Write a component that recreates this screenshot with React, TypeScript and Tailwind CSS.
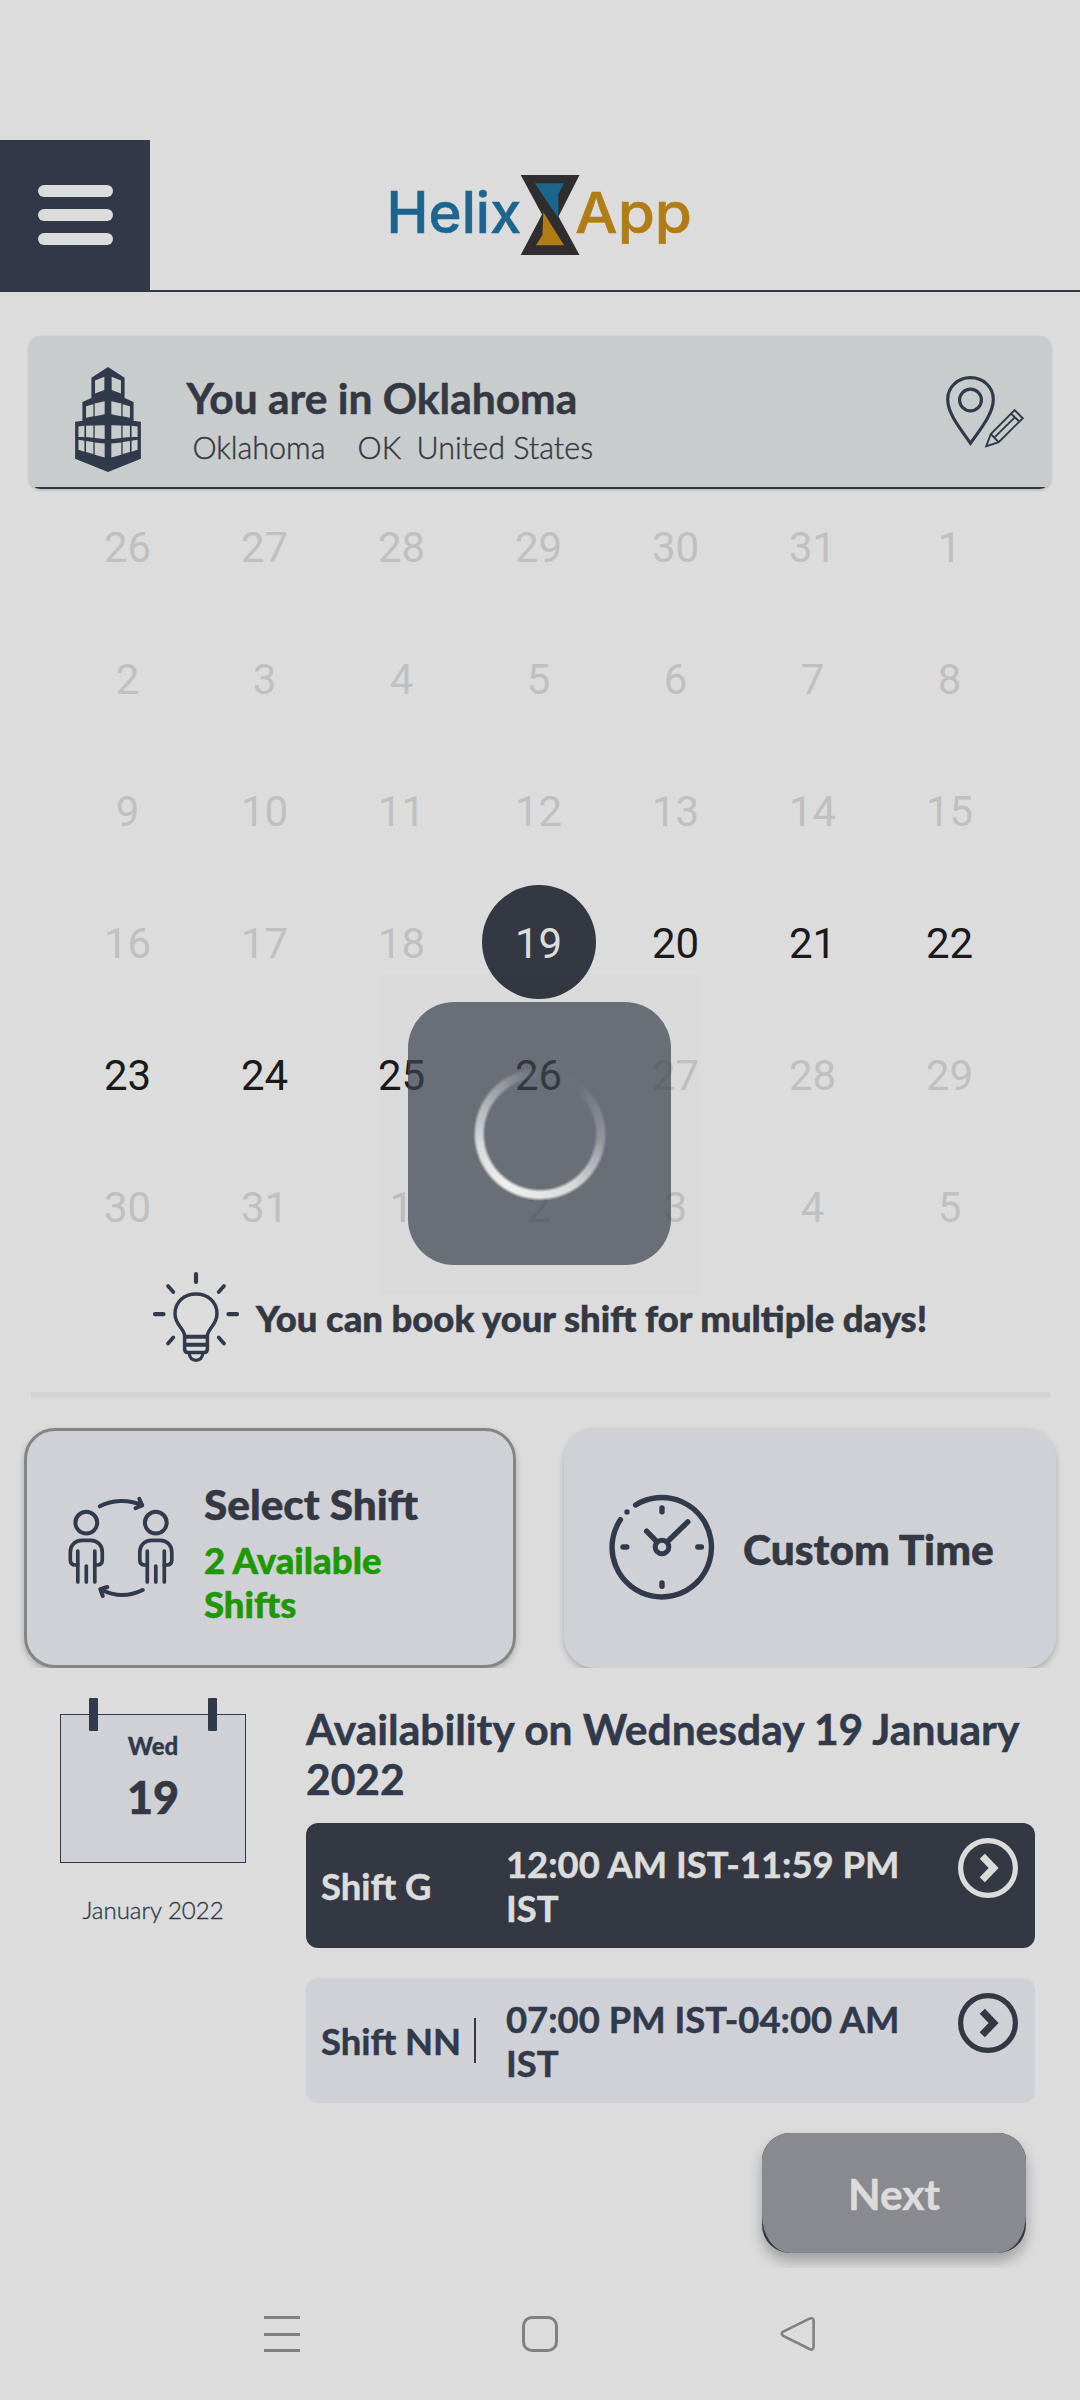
import React from "react";

const INK = "#313a4b";

function Logo() {
  return (
    <svg className="block overflow-visible" width="320" height="84" viewBox="380 173 320 84">
      <text x="386.5" y="232.5" fontFamily="Inter" fontWeight="500" fontSize="57" fill="#1c658f" stroke="#1c658f" strokeWidth="0.5" textLength="135" lengthAdjust="spacingAndGlyphs">Helix</text>
      <text x="575" y="232.5" fontFamily="Inter" fontWeight="500" fontSize="56" fill="#b07c16" stroke="#b07c16" strokeWidth="0.5" textLength="117" lengthAdjust="spacingAndGlyphs">App</text>
      <path d="M520.7 175H579.5L558.5 216.5L579.5 255H520.7L542 214.5Z" fill="#302d2e" />
      <path d="M535 183.3H564L558.3 194V217.5L551 207.5Z" fill="#1c658f" />
      <path d="M543.3 212L564 245.3H536L542.4 235Z" fill="#b07c16" />
    </svg>
  );
}

function Building() {
  return (
    <svg className="block" width="66" height="105" viewBox="75 50 198 316">
      <path fill={INK} d="M174 50L224 82V143L251 155V212L273 215V326L174 366L75 326V215L97 212V155L124 143V82Z" />
      <g fill="#c8cccc">
        {["", "translate(348 0) scale(-1 1)"].map((t) => (
          <g key={t} transform={t}>
            <path d="M135 91L163 79V119L135 130Z" />
            <path d="M108 168L130 162V198L108 203Z" />
            <path d="M134 160L164 153V192L134 198Z" />
            <path d="M85 229L103 227V261L85 261Z" />
            <path d="M108 227L130 226V263L108 261Z" />
            <path d="M134 226L164 225V267L134 264Z" />
            <path d="M85 269L103 272V305L85 299Z" />
            <path d="M108 273L130 276V312L108 306Z" />
            <path d="M134 277L164 280V322L134 314Z" />
          </g>
        ))}
      </g>
    </svg>
  );
}

function PinPencil() {
  return (
    <svg className="block" width="82" height="76" viewBox="944 374 82 76" fill="none" stroke={INK}>
      <g strokeWidth="3.2">
        <path d="M970.5 443.2C959 427 947.7 413 947.7 399.5C947.7 387 957.8 377.7 970.5 377.7C983.2 377.7 993.3 387 993.3 399.5C993.3 413 982 427 970.5 443.2Z" />
        <circle cx="970.5" cy="400" r="10.9" />
      </g>
      <g strokeWidth="1.9">
        <path d="M986.3 446.2L990.8 434L1014.6 410.2L1022.8 418.2L998.7 442.2Z" />
        <path d="M990.8 434L998.7 442.2M1011 413.5L1019.5 421.8M994.2 437.6L1014.5 417.6" />
      </g>
    </svg>
  );
}

function Bulb() {
  return (
    <svg className="block" width="88" height="92" viewBox="152 1271 88 92" fill="none" stroke={INK} strokeLinecap="round">
      <path strokeWidth="4.2" d="M196 1274V1282M155 1314.2H163.5M228.5 1314.2H237" />
      <path strokeWidth="3.7" d="M168 1286L173.3 1292M224 1286L218.7 1292M173.3 1337.5L168 1343.5M218.7 1337.5L224 1343.5" />
      <path strokeWidth="3.5" d="M184.6 1335C183 1327 175 1325 175 1313.5C175 1302 184 1294 196 1294C208 1294 217 1302 217 1313.5C217 1325 209 1327 207.4 1335V1349Q207.4 1352.5 204 1352.5H188Q184.6 1352.5 184.6 1349Z" />
      <path strokeWidth="3.9" strokeLinecap="butt" d="M184.6 1336.7H207.4M184.6 1344.8H207.4" />
      <path strokeWidth="3.3" d="M189 1353C190 1358.5 192 1360.3 196 1360.3C200 1360.3 202 1358.5 203 1353" />
    </svg>
  );
}

function SwapPeople() {
  return (
    <svg className="block" width="106" height="106" viewBox="68.5 1494 106 106" fill="none" stroke={INK} strokeWidth="4" strokeLinecap="round" strokeLinejoin="round">
      {[0, 69.5].map((dx) => (
        <g key={dx} transform={`translate(${dx} 0)`}>
          <circle cx="86.8" cy="1522.7" r="10.9" />
          <path strokeWidth="3.7" d="M78.3 1551V1582M95.3 1551V1582M86.8 1566V1582" />
          <path strokeWidth="3.7" d="M78.3 1565H76C72.5 1565 70.8 1563 70.8 1560V1552C70.8 1545.5 75.5 1540.3 82.5 1540.3H91.1C98.1 1540.3 102.8 1545.5 102.8 1552V1560C102.8 1563 101.1 1565 97.6 1565H95.3" />
        </g>
      ))}
      <path d="M100.3 1506.3C113 1499.5 129 1499.5 142 1505M139.8 1498.8L142.8 1505.5L136 1508.2" />
      <path d="M143.2 1590C130 1596.5 115 1596.5 101.5 1589.5M107.8 1587L100.8 1589.2L103.2 1596" />
    </svg>
  );
}

function Clock() {
  return (
    <svg className="block" width="106" height="106" viewBox="608.2 1494.3 106 106" fill="none" stroke={INK} strokeWidth="5.4" strokeLinecap="round">
      <path d="M634.8 1505.3A49.7 49.7 0 1 1 619.6 1520" />
      <path d="M626.2 1512.3V1512.4M661.2 1508.3V1512M661.2 1583.3V1586.5M622.2 1547.3H626M697 1547.3H700.6" />
      <circle cx="661.2" cy="1547.3" r="6.8" strokeWidth="5" />
      <path d="M645.8 1531.5L656 1542M687 1522.2L667 1541.5" />
    </svg>
  );
}

function GoIcon({ color }: { color: string }) {
  return (
    <svg className="block shrink-0" width="60" height="60" viewBox="0 0 60 60" fill="none" stroke={color}>
      <circle cx="30" cy="30" r="27.4" strokeWidth="5.2" />
      <path strokeWidth="7.2" d="M24.3 18.3L35.6 30L24.3 41.7" />
    </svg>
  );
}

const days: number[][] = [
  [26, 27, 28, 29, 30, 31, 1],
  [2, 3, 4, 5, 6, 7, 8],
  [9, 10, 11, 12, 13, 14, 15],
  [16, 17, 18, 19, 20, 21, 22],
  [23, 24, 25, 26, 27, 28, 29],
  [30, 31, 1, 2, 3, 4, 5],
];

function Calendar() {
  return (
    <div className="ml-[59px] grid w-[959px] grid-cols-7 gap-y-[18px] font-['Roboto'] text-[42px]">
      {days.flat().map((d, i) => {
        const selected = i === 24;
        const open = i > 24 && i < 32;
        const tone = selected ? "rounded-full bg-[#343842] text-[#dcdcdc]" : open ? "text-[#1a1a1a]" : "text-[#c0c0c0]";
        return (
          <div key={i} className="flex h-[114px] justify-center">
            <div className={`flex size-[114px] items-center justify-center pt-[3px] ${tone}`}>{d}</div>
          </div>
        );
      })}
    </div>
  );
}

function Loader() {
  return (
    <div className="absolute top-[974px] left-[380px] flex size-[320px] items-center justify-center bg-black/[0.006]">
      <div className="-mt-px -ml-px flex size-[262.5px] items-center justify-center rounded-[46px] bg-[rgba(62,68,80,0.717)]">
        <div className="size-[134px] rounded-full bg-[conic-gradient(from_0deg,rgba(240,240,240,0.02)_0deg,rgba(240,240,240,0.02)_40deg,rgba(240,240,240,0.3)_95deg,rgba(240,240,240,0.8)_145deg,rgba(240,240,240,0.92)_180deg,rgba(240,240,240,1)_215deg,rgba(240,240,240,0.82)_262deg,rgba(240,240,240,0.42)_312deg,rgba(240,240,240,0.15)_340deg,rgba(240,240,240,0.02)_360deg)] [mask-image:radial-gradient(circle,transparent_54.5px,black_58px,black_63.5px,transparent_67px)]" />
      </div>
    </div>
  );
}

function ShiftRow({ name, time, active }: { name: string; time: string; active?: boolean }) {
  return (
    <div className={`flex h-[125px] w-[729px] rounded-[12px] text-[36.4px] leading-[44px] font-bold [-webkit-text-stroke-width:0.5px] ${active ? "bg-[#343842] text-[#dcdcdc]" : "bg-[#d0d1d7] text-[#313a4b]"}`}>
      <div className="mt-[40px] flex h-[45px] w-[170px] items-center justify-between pl-[15px] whitespace-nowrap">
        <span>{name}</span>
        {!active && <span className="h-[45px] w-[2px] bg-[#343842]" />}
      </div>
      <div className="mt-[19px] ml-[30px] w-[420px]">{time}</div>
      <div className="mt-[15px] ml-[32px]">
        <GoIcon color={active ? "#dcdcdc" : "#343842"} />
      </div>
    </div>
  );
}

export default function App() {
  return (
    <div className="relative flex h-[2400px] w-[1080px] flex-col overflow-hidden bg-[#dcdcdc] pt-[140px] font-['Lato',sans-serif] text-[#343842]">
      <header className="flex h-[152px] shrink-0 border-b-2 border-[#313a4b]">
        <div className="-mb-[2px] flex w-[150px] flex-col items-center justify-center gap-[12px] bg-[#313848] pb-[2px]">
          <span className="h-[12px] w-[75px] rounded-full bg-[#dcdcdc]" />
          <span className="h-[12px] w-[75px] rounded-full bg-[#dcdcdc]" />
          <span className="h-[12px] w-[75px] rounded-full bg-[#dcdcdc]" />
        </div>
        <div className="mt-[33px] ml-[230px]">
          <Logo />
        </div>
      </header>

      <section className="mx-[29px] mt-[44px] h-[153px] shrink-0 overflow-hidden rounded-[12px] bg-[#c8cccc] shadow-[0_1px_3px_rgba(0,0,0,0.2)]">
        <div className="flex h-[153px] border-b-2 border-[#333642]">
          <div className="mt-[31px] ml-[46px]">
            <Building />
          </div>
          <div className="ml-[45.5px] grow">
            <div className="mt-[37px] text-[42.5px] leading-[50px] font-bold [-webkit-text-stroke-width:0.5px]">You are in Oklahoma</div>
            <div className="mt-[5px] flex text-[30.5px] leading-[38px] font-light [-webkit-text-stroke-width:0.4px]">
              <span className="ml-[6px] w-[165px]">Oklahoma</span>
              <span className="w-[59px]">OK</span>
              <span>United States</span>
            </div>
          </div>
          <div className="mt-[38px] mr-[25px]">
            <PinPencil />
          </div>
        </div>
      </section>

      <Calendar />

      <section className="flex h-[129px] shrink-0">
        <div className="mt-[8px] ml-[152px]">
          <Bulb />
        </div>
        <div className="mt-[33px] ml-[16px] text-[36.4px] leading-[44px] font-black whitespace-nowrap [-webkit-text-stroke-width:0.5px]">You can book your shift for multiple days!</div>
      </section>
      <div className="mr-[30px] ml-[31px] h-[6px] shrink-0 bg-[#d2d2d2]" />

      <section className="mt-[24px] flex h-[246px] shrink-0 gap-[48px] overflow-hidden px-[24px] pt-[6px] [-webkit-text-stroke-width:0.5px]">
        <div className="flex h-[240px] w-[492px] rounded-[31px] border-[3px] border-[#858585] bg-[#d0d1d7] shadow-[0_3px_6px_rgba(0,0,0,0.22)]">
          <div className="mt-[63px] ml-[41px]">
            <SwapPeople />
          </div>
          <div className="mt-[48px] ml-[30px] w-[200px] font-black">
            <div className="text-[42.3px] leading-[50px] whitespace-nowrap">Select Shift</div>
            <div className="mt-[9px] text-[36.5px] leading-[44px] text-[#1f9800]">2 Available Shifts</div>
          </div>
        </div>
        <div className="flex h-[240px] w-[492px] rounded-[31px] bg-[#d0d1d7] shadow-[0_3px_6px_rgba(0,0,0,0.22)]">
          <div className="mt-[66px] ml-[44.5px]">
            <Clock />
          </div>
          <div className="mt-[96px] ml-[28.5px] text-[42.5px] leading-[50px] font-black">Custom Time</div>
        </div>
      </section>

      <section className="flex shrink-0">
        <div className="mt-[30px] ml-[60px] w-[186px]">
          <div className="relative mt-[16px] h-[149px] border border-[#313a4b] bg-[#d0d1d7] text-center">
            <span className="absolute -top-[17px] left-[28px] h-[33px] w-[9px] rounded-[1px] bg-[#313a4b]" />
            <span className="absolute -top-[17px] right-[28px] h-[33px] w-[9px] rounded-[1px] bg-[#313a4b]" />
            <div className="mt-[16px] text-[24px] leading-[30px] font-black text-[#313a4b] [-webkit-text-stroke-width:0.3px]">Wed</div>
            <div className="mt-[8px] text-[45px] leading-[56px] font-black [-webkit-text-stroke-width:0.5px]">19</div>
          </div>
          <div className="mt-[32px] text-center text-[24px] leading-[30px] font-light text-[#313a4b] [-webkit-text-stroke-width:0.35px]">January 2022</div>
        </div>
        <div className="mt-[36px] ml-[60px] w-[735px]">
          <h2 className="text-[42.55px] leading-[50px] font-bold text-[#313a4b] [-webkit-text-stroke-width:0.5px]">Availability on Wednesday 19 January 2022</h2>
          <div className="mt-[19px] flex flex-col gap-[30px]">
            <ShiftRow name="Shift G" time="12:00 AM IST-11:59 PM IST" active />
            <ShiftRow name="Shift NN" time="07:00 PM IST-04:00 AM IST" />
          </div>
        </div>
      </section>

      <div className="mt-[18px] flex h-[147px] shrink-0 justify-end overflow-hidden pt-[12px] pr-[54px]">
        <div className="h-[120px] w-[264px] rounded-[28px] bg-[#313949] shadow-[0_8px_14px_rgba(0,0,0,0.28)]">
          <div className="flex h-[120px] justify-center rounded-[28px_28px_28px_28px/28px_28px_38px_38px] bg-[#898a8f] pt-[36px] text-[42.4px] leading-[50px] font-bold text-[#dcdcdc] [-webkit-text-stroke-width:0.5px]">Next</div>
        </div>
      </div>

      <nav className="mt-[48px] flex shrink-0 items-start pl-[264px]">
        <div className="flex h-[36px] w-[36px] flex-col justify-between">
          <span className="h-[3px] bg-[#808080]" />
          <span className="h-[3px] bg-[#808080]" />
          <span className="h-[3px] bg-[#808080]" />
        </div>
        <div className="ml-[222px] size-[36px] rounded-[10px] border-[3px] border-[#808080]" />
        <svg className="ml-[222px] block" width="36" height="36" viewBox="0 0 36 36" fill="none" stroke="#808080" strokeWidth="2.6">
          <path d="M29.5 2.6L2.8 15.8Q0.8 17.6 2.8 19.6L29.5 33Q33.4 34.5 33.6 31V4.6Q33.4 1.2 29.5 2.6Z" />
        </svg>
      </nav>

      <Loader />
    </div>
  );
}
